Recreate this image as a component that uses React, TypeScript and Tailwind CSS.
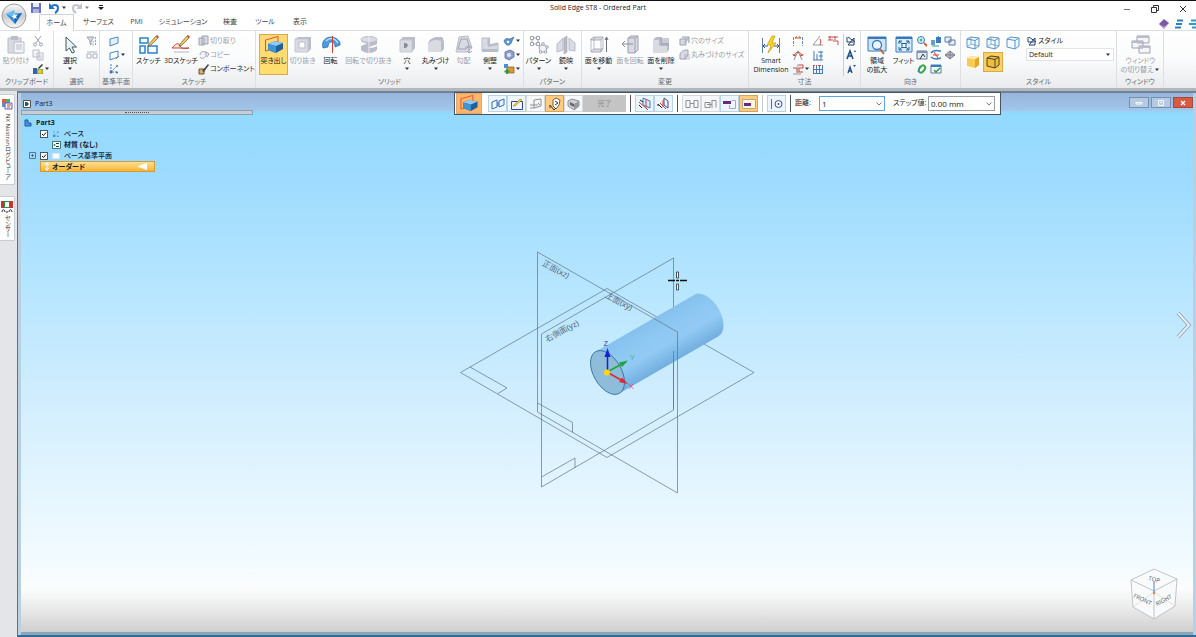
import React from "react";

type Kids = { children?: React.ReactNode };

const Big = ({ children }: Kids) => (
  <svg viewBox="0 0 20 20" className="h-5 w-5 shrink-0" aria-hidden="true" fill="none" strokeWidth="1">
    {children}
  </svg>
);
const Sm = ({ children }: Kids) => (
  <svg viewBox="0 0 12 12" className="h-3 w-3 shrink-0" aria-hidden="true" fill="none" strokeWidth="1">
    {children}
  </svg>
);
const Caret = () => (
  <svg viewBox="0 0 6 4" className="h-1 w-1.5 shrink-0" aria-hidden="true">
    <path d="M1 .5h4L3 3z" fill="#333" />
  </svg>
);

/* ---------- ribbon building blocks ---------- */

function Group({ label, width, children }: Kids & { label: string; width: string }) {
  return (
    <section className={`flex shrink-0 flex-col border-r border-[#dcdfe3] pt-[3px] ${width}`} aria-label={label}>
      <div className="flex h-[42px] items-start">{children}</div>
      <div className="mt-px text-center leading-[10px] whitespace-nowrap text-[#666b73]">{label}</div>
    </section>
  );
}

function Tool({
  label,
  width,
  icon,
  off,
  active,
  caret,
}: {
  label: React.ReactNode;
  width: string;
  icon: React.ReactNode;
  off?: boolean;
  active?: boolean;
  caret?: boolean;
}) {
  return (
    <button
      type="button"
      className={`flex h-[41px] shrink-0 flex-col items-center border leading-[9px] whitespace-nowrap ${width} ${
        active ? "border-[#d9a94a] bg-linear-to-b from-[#ffd978] to-[#ffdf6e]" : "border-transparent"
      } ${off ? "text-[#9a9ea6]" : "text-[#222]"}`}
    >
      {icon}
      <span className="mt-px">{label}</span>
      {caret && (
        <span className="mt-0.5">
          <Caret />
        </span>
      )}
    </button>
  );
}

function Row({ name, icon, off, caret, text }: { name: string; icon: React.ReactNode; off?: boolean; caret?: boolean; text?: boolean }) {
  return (
    <button type="button" aria-label={name} className={`flex h-[14px] items-center whitespace-nowrap ${off ? "text-[#9a9ea6]" : "text-[#333]"}`}>
      {icon}
      {text && <span>{name}</span>}
      {caret && <Caret />}
    </button>
  );
}

/* ---------- icons ---------- */

const Pencil = ({ x, y }: { x: number; y: number }) => (
  <g transform={`translate(${x} ${y})`}>
    <path d="M0 9 7 1l2 2-7 7-3 1z" fill="#efc468" stroke="#7a5a2a" strokeWidth=".7" />
    <path d="m7 1 1-1 2 2-1 1z" fill="#b8433a" />
  </g>
);
const Solid = () => (
  <g>
    <path d="M1.500 5 14 1.500v10L1.500 16z" stroke="#e0552b" />
    <path d="m4 9 7-3 8 2v6l-7 4-8-3z" fill="#1f5f9c" />
    <path d="m4 9 7-3 8 2-7 3z" fill="#8fcbf3" />
    <path d="m4 9 8 2v7l-8-3z" fill="#3f93d8" />
  </g>
);
const WireCube = ({ fill, stroke = "#5a94c8", inner = true }: { fill?: string; stroke?: string; inner?: boolean }) => (
  <svg viewBox="0 0 14 14" className="h-3.5 w-3.5" aria-hidden="true" fill="none" stroke={stroke} strokeWidth="1">
    <path d="m1 3 4-2 8 1v8l-4 3-8-2z" fill={fill ?? "#f3faff"} />
    <path d="m1 3 8 1.500V13M9 4.500l4-2.500" />
    {inner && <path d="M5 1v7l8 2M5 8l-4 3" strokeWidth=".7" />}
  </svg>
);
const PlaneIcon = ({ c = "#4a86c0", f = "#e4f1fb" }: { c?: string; f?: string }) => <path d="m2 4 8-2v6l-8 3z" fill={f} stroke={c} />;
const DotAxes = () => (
  <>
    <path d="M3 1v8h7M3 9l5-5" stroke="#4a7fbe" strokeDasharray="2 1" />
    <circle cx="3" cy="9" r="1.500" fill="#3a6fb0" />
    <circle cx="9" cy="3" r="1" fill="#3a6fb0" />
    <circle cx="9" cy="9.500" r="1" fill="#3a6fb0" />
  </>
);
const Mag = ({ c = "#2f7fc2" }: { c?: string }) => (
  <>
    <circle cx="5" cy="5" r="3.500" fill="#dff1fb" stroke={c} />
    <path d="m8 8 3 3" stroke="#c2623a" strokeWidth="1.800" />
    <path d="M3.500 5h3M5 3.500v3" stroke="#2d9c62" />
  </>
);
const G1 = "#d9dbe3";
const G2 = "#b9bcc9";
const G3 = "#9da1b2";

function Ribbon() {
  return (
    <div className="flex h-[58px] shrink-0 overflow-hidden border-t border-[#dcdfe3] bg-linear-to-b from-white via-[#fafbfc] to-[#e9ebee]">
      <Group label="クリップボード" width="w-[54px]">
        <Tool
          label="貼り付け"
          width="w-[32px]"
          off
          icon={
            <Big>
              <path d="M2 3h13v15H2z" fill={G1} stroke={G2} />
              <path d="M5 1h7v4H5z" fill={G2} />
              <path d="M8 7h10v11H8z" fill="#f4f4f8" stroke={G2} />
              <path d="M10 10h6M10 12h6M10 14h6" stroke={G2} />
            </Big>
          }
        />
        <div className="flex flex-col">
          <Row name="切り取り" off icon={<Sm><path d="m3 1 5 7M9 1 4 8" stroke={G3} /><circle cx="3" cy="9.500" r="1.500" stroke={G3} /><circle cx="9" cy="9.500" r="1.500" stroke={G3} /></Sm>} />
          <Row name="コピー" off icon={<Sm><path d="M1 1h6v7H1zM5 4h6v7H5z" fill="#f4f4f8" stroke={G2} /><path d="M6.500 7h3M6.500 9h3" stroke={G2} /></Sm>} />
          <Row name="書式のコピー" caret icon={<Sm><path d="M1 5h4v6H1z" fill="#2d62b5" /><path d="M5 6h6v5H5z" fill="#8ab33a" /><circle cx="8" cy="8.500" r="2" fill="#f0c63c" /><path d="m6 5 4-4 1 1-4 4z" fill="#333" /></Sm>} />
        </div>
      </Group>

      <Group label="選択" width="w-[46px]">
        <Tool label="選択" width="w-[32px]" caret icon={<Big><path d="M6 2v14l3.500-3 2.500 5 2.500-1-2.500-5h4.500z" fill="#e8f4f3" stroke="#40575c" /></Big>} />
        <div className="flex flex-col">
          <Row name="フィルタ" off icon={<Sm><path d="M1 2h7L5 6v4L4 9V6z" fill={G1} stroke={G3} /><path d="M9.500 2v8M7 5.500v5" stroke={G3} strokeDasharray="2 1" /></Sm>} />
          <Row name="選択モード" off icon={<Sm><path d="M1 5h4v4H1zM7 5h4v4H7zM1 3h10" stroke={G3} strokeWidth=".8" /></Sm>} />
        </div>
      </Group>

      <Group label="基準平面" width="w-[33px]">
        <div className="ml-2 flex flex-col">
          <Row name="一致平面" icon={<Sm><PlaneIcon /></Sm>} />
          <Row name="平行平面" caret icon={<Sm><PlaneIcon f="none" /><path d="m8 10 3-3" stroke="#4a86c0" /></Sm>} />
          <Row name="座標系" icon={<Sm><DotAxes /></Sm>} />
        </div>
      </Group>

      <Group label="スケッチ" width="w-[123px]">
        <Tool label="スケッチ" width="w-[31px]" icon={<Big><path d="M1 3h8v5H1zM1 11h5v7H1zM9 11h9v7H9z" fill="#f7fcff" stroke="#2a82cc" strokeWidth="1.500" /><Pencil x={10} y={0} /></Big>} />
        <Tool label="3Dスケッチ" width="w-[34px]" icon={<Big><path d="M3 17h15" stroke="#b3b7bd" /><path d="M1 13c5-6 7-5 8-2s5 3 9 2z" stroke="#c5483f" fill="#f4e7dc" /><Pencil x={9} y={0} /></Big>} />
        <div className="flex flex-col">
          <Row name="切り取り" text off icon={<Sm><path d="M1 3h5v7H1zM4 1h6v8H4z" fill={G1} stroke={G3} /></Sm>} />
          <Row name="コピー" text off icon={<Sm><path d="M2 6c0-3 3-4 6-3v4c-2 3-5 3-6 1M8 3l3 2-2 3" fill="#f4f4f8" stroke={G3} /></Sm>} />
          <Row name="コンポーネント" text icon={<Sm><path d="M1 6h5v5H1z" fill="#d9b46c" stroke="#6a5030" /><path d="m4 8 6-7 1 1-5 7z" fill="#4a4a58" /></Sm>} />
        </div>
      </Group>

      <Group label="ソリッド" width="w-[268px]">
        <div className="w-[3px]" />
        <Tool label="突き出し" width="w-[29px]" active icon={<Big><Solid /></Big>} />
        <Tool label="切り抜き" width="w-[29px]" off icon={<Big><path d="m2 4 3-2h13v12l-3 3H2z" fill={G2} /><path d="M2 4h13v13H2z" fill={G1} stroke="#c6c9d3" /><path d="M6 7h6v6H6z" fill="#fff" stroke={G2} /></Big>} />
        <Tool label="回転" width="w-[27px]" icon={<Big><path d="M2 13C0 6 5 2 10 2s10 4 9 8l-5 2c0-4-2-5-4-5s-3 3-3 5z" fill="#4b9be0" stroke="#2564a6" strokeWidth=".7" /><path d="M5 6c4-4 9-3 12 2" stroke="#b7dffb" strokeWidth="1.500" /><path d="M11.500 1v17" stroke="#d4402f" /></Big>} />
        <Tool label="回転で切り抜き" width="w-[49px]" off icon={<Big><ellipse cx="10" cy="4.500" rx="8" ry="3" fill={G1} stroke={G2} /><path d="M2 5c4 3 12 3 16 0v4c-3 2-8 2-8 4 4 0 6-1 8-2v4c-4 4-12 4-16 0v-4c3-1 5-2 6-3-3 0-5-1-6-2z" fill={G2} /><path d="M10 1v17" stroke="#e8e9ee" /></Big>} />
        <Tool label="穴" width="w-[28px]" caret icon={<Big><path d="m3 5 3-3h12v11l-3 4H3z" fill={G2} /><path d="M3 5h12v12H3z" fill={G1} stroke="#c6c9d3" /><path d="M7 8c5-1 5 5 0 5z" fill="#858aa0" /></Big>} />
        <Tool label="丸みづけ" width="w-[29px]" caret icon={<Big><path d="M2 17V9c1-5 5-7 10-7h4c2 2 2 5 2 12l-3 3z" fill={G2} /><path d="M2 17V9c3-4 8-5 13-3v11z" fill={G1} /></Big>} />
        <Tool label="勾配" width="w-[27px]" off icon={<Big><path d="m5 2 9-1 4 12-5 4H2z" fill={G1} stroke={G2} /><path d="M7 4h6l2 7-3 3H4z" stroke={G3} /><path d="M11 12h7m-3-2v8m-2-2 2 2 3-2" stroke={G3} /></Big>} />
        <Tool label="側壁" width="w-[26px]" caret icon={<Big><path d="M2 3h6v7l10-2v8H2z" fill={G1} stroke={G2} /><path d="m8 3 2-1v8l8-2v2L8 12zM2 14h16v3H2z" fill={G2} /></Big>} />
        <div className="flex flex-col">
          <Row name="薄板" caret icon={<Sm><path d="M1 6c2-4 4-2 6-2l4-2-2 4C8 11 3 12 1 6z" fill="#5b97cf" stroke="#2c5b8e" strokeWidth=".6" /><circle cx="5" cy="7" r="1.300" fill="#fff" /></Sm>} />
          <Row name="ねじ山" caret icon={<Sm><path d="m2 3 5-2 4 2v5l-5 3-4-2z" fill="#8fa0cc" stroke="#4b5c94" strokeWidth=".7" /><circle cx="6" cy="6" r="2" fill="#dfe7f7" /></Sm>} />
          <Row name="追加" caret icon={<Sm><path d="M4 4h7v6H4z" fill="#d89c34" stroke="#a04a28" strokeWidth=".7" /><path d="M1 1h4v4H1z" fill="#4a8ed0" /><path d="M4 6v5M1.500 8.500h5" stroke="#2f9c3e" strokeWidth="2" /></Sm>} />
        </div>
      </Group>

      <Group label="パターン" width="w-[58px]">
        <Tool label="パターン" width="w-[29px]" caret icon={<Big><path d="M3 3h6v6H3z" stroke={G3} /><path d="M1.500 1.500h3v3h-3zM7.500 1.500h3v3h-3zM1.500 7.500h3v3h-3zM7.500 7.500h3v3h-3z" fill="#fff" stroke={G3} /><path d="m14 9 4 3-1.500 5h-5L10 12z" fill="#f4f4f8" stroke={G3} /><circle cx="14" cy="9" r="1.300" fill="#fff" stroke={G3} /><circle cx="18" cy="12" r="1.300" fill="#fff" stroke={G3} /><circle cx="16.500" cy="17" r="1.300" fill="#fff" stroke={G3} /><circle cx="11.500" cy="17" r="1.300" fill="#fff" stroke={G3} /></Big>} />
        <Tool label="鏡映" width="w-[26px]" caret icon={<Big><path d="M1 9 7 3v12l-6 2zM13 3l6 5v8l-6-1z" fill={G1} stroke={G2} /><path d="m8 3 3-2v16l-3 2z" fill={G2} stroke={G3} strokeWidth=".6" /></Big>} />
      </Group>

      <Group label="変更" width="w-[167px]">
        <Tool label="面を移動" width="w-[33px]" caret icon={<Big><path d="m2 4 3-2h9l-2 3H2zM2 16l3-2h9l-2 3H2z" fill={G1} stroke={G3} strokeWidth=".8" /><path d="M2 4v12M12 5v12M5 2v12M14 2v12" stroke={G3} strokeWidth=".7" /><path d="M17.500 17V3m-1.500 2 1.500-3L19 5" stroke="#666b80" /></Big>} />
        <Tool label="面を回転" width="w-[30px]" off icon={<Big><path d="m8 3 3-2h7v14l-3 3H8z" fill={G1} stroke={G3} /><path d="M8 3h7v15M15 3l3-2" stroke={G3} /><path d="M13 9H2l3-3M2 9l3 3" stroke="#868ba0" /></Big>} />
        <Tool label="面を削除" width="w-[32px]" caret icon={<Big><path d="m2 5 3-3h6v6h7v7l-3 3H2z" fill={G2} /><path d="M2 5h6v6h8v7H2z" fill={G1} /><path d="M9 3h9v8l-8-1z" fill={G3} opacity=".55" /></Big>} />
        <div className="ml-[2px] flex flex-col">
          <Row name="穴のサイズ" text off icon={<Sm><path d="M1 4h6v6H1zM3 2h7v6" fill={G1} stroke={G3} /><path d="m5 8 5-6" stroke={G3} /></Sm>} />
          <Row name="丸みづけのサイズ" text off icon={<Sm><path d="M1 10V5c2-4 5-4 8-4v5l-3 4z" fill={G1} stroke={G3} /><path d="M5 6h6M5 8h6M5 10h6" stroke={G3} strokeWidth=".7" /></Sm>} />
        </div>
      </Group>

      <Group label="寸法" width="w-[112px]">
        <div className="w-[1px]" />
        <Tool label={<>Smart<br />Dimension</>} width="w-[42px]" icon={<Big><path d="M1.500 3v15M18.500 3v15" stroke="#5a7fb4" /><path d="M2 11h5M13 11h5M4 9l-2 2 2 2M16 9l2 2-2 2" stroke="#38588c" /><path d="m11 1-5 9h4l-3 8 8-10h-4l3-7z" fill="#ffd21e" stroke="#b98a10" strokeWidth=".6" /></Big>} />
        <div className="grid w-[49px] grid-cols-[20px_15px_14px]">
          <Row name="距離" icon={<Sm><path d="M1.500 2v9M10.500 2v9" stroke="#5a8fd0" strokeDasharray="3 1" /><path d="M3 3h6M3 3l2-1.500M9 3 7 1.500" stroke="#d0402f" /></Sm>} />
          <Row name="角度寸法" icon={<Sm><path d="M1 10 8 1M1 10h10" stroke="#999" /><path d="M8 4c1 1 1 4 0 6" stroke="#d0402f" /></Sm>} />
          <Row name="寸法公差" icon={<Sm><path d="M1 2h10M3 1v4M8 1v4M1 5h5M6 6h5v4" stroke="#c0504a" /></Sm>} />
          <Row name="角度" icon={<Sm><path d="M6 2 2 11M6 2l4 9" stroke="#8a8f98" /><path d="M2 7c1-5 7-5 8 0M1 5l1 2 2-1M11 5l-1 2-2-1" stroke="#d0402f" /></Sm>} />
          <Row name="累進寸法" icon={<Sm><path d="M2 2v9M5 5v6M9 2v9M1 11h10M6 3h5M7 7h4" stroke="#447ab8" /></Sm>} />
          <span />
          <Row name="座標寸法" caret icon={<Sm><path d="M1 5h4v5M7 2h4v3H7v4h4" stroke="#d0402f" /><path d="M1 11h8M6 1v9" stroke="#999" /></Sm>} />
          <Row name="整列" icon={<Sm><path d="M1.500 2v9M4.500 2v9M7.500 2v9M10.500 2v9M1 6.500h10M1 10.500h10" stroke="#447ab8" /><path d="M2 2.500h8" stroke="#c0504a" strokeDasharray="1 1" /></Sm>} />
        </div>
        <div className="ml-0.5 flex flex-col border-l border-[#c9ccd2] pl-[1px]">
          <Row name="寸法スタイル" icon={<Sm><path d="M2 2v5h6M9 3v7H3zM3 2l7 5" stroke="#1f3f70" /></Sm>} />
          <Row name="文字を大きく" icon={<Sm><path d="m2 10 3-8 3 8M3.300 7h3.500" stroke="#1f4f86" strokeWidth="1.600" /><path d="m9 3 1-2 1 2z" fill="#1f4f86" /></Sm>} />
          <Row name="文字を小さく" icon={<Sm><path d="m3 10 2-6 2 6M4 8h2.500" stroke="#1f4f86" strokeWidth="1.300" /><path d="M8 2h3l-1.500 2z" fill="#1f4f86" /></Sm>} />
        </div>
      </Group>

      <Group label="向き" width="w-[100px]">
        <Tool label={<>領域<br />の拡大</>} width="w-[32px]" icon={<Big><path d="M1 2h18v14H1z" fill="#cfe6f8" stroke="#3778bb" /><path d="M1 2h18v2H1z" fill="#3778bb" /><circle cx="10" cy="10" r="4.500" fill="#eaf6fc" stroke="#3c7ab0" strokeWidth="1.300" /><path d="m13 14 4 5" stroke="#b06a4e" strokeWidth="2" /></Big>} />
        <Tool label="フィット" width="w-[21px]" icon={<Big><path d="M2 2h16v15H2z" fill="#d9ecfa" stroke="#3778bb" /><path d="M2 2h16v2H2z" fill="#3778bb" /><path d="M5 9V6h3M12 6h3v3M15 12v3h-3M8 15H5v-3M5 6l10 9M15 6 5 15" stroke="#27619f" /><path d="M8 8.500h4v4H8z" fill="#f4faff" stroke="#27619f" /></Big>} />
        <div className="ml-0.5 grid grid-cols-[14px_14px_14px]">
          <Row name="ズーム" icon={<Sm><Mag /></Sm>} />
          <Row name="画面移動" icon={<Sm><path d="M1 5h4v5H1z" fill="#6d9cc9" /><path d="M6 2h5v6H6z" fill="#3c7ab8" /><path d="M2 11h7M8 1l3 3" stroke="#2d9c8a" /></Sm>} />
          <Row name="前の表示" icon={<Sm><path d="M1 2h6v5H1zM5 5h6v5H5z" fill="#e9f2fa" stroke="#5679a5" /></Sm>} />
          <Row name="回転表示" icon={<Sm><path d="M1 2h10v8H1z" fill="#e8eef5" stroke="#56799f" /><path d="M1 2h10v2H1z" fill="#7793b5" /><path d="m4 10 3-5 2 3" stroke="#333" /></Sm>} />
          <Row name="スピン" icon={<Sm><path d="M1 4c3-4 7-2 10-2M1 8c3 3 7 2 10 1" stroke="#377fc0" strokeWidth="1.500" /><path d="M3 6h6M4 3l4 6" stroke="#d0402f" /></Sm>} />
          <Row name="共通表示" icon={<Sm><path d="m1 6 5-4 5 4-5 4z" fill="#b9bec7" stroke="#7b828e" /><path d="M6 2v8M1 6h10" stroke="#666c78" strokeWidth=".7" /></Sm>} />
          <Row name="面を見る" icon={<Sm><ellipse cx="6" cy="6" rx="2.500" ry="4" transform="rotate(35 6 6)" stroke="#35a548" strokeWidth="2" /><path d="m2 9 2-6" stroke="#2c86c0" /></Sm>} />
          <Row name="スケッチ表示" icon={<Sm><path d="M1 2h10v8H1z" fill="#f4faff" stroke="#56799f" /><path d="M1 2h10v2H1z" fill="#3c7ac0" /><path d="m4 7 2 2 4-4" stroke="#2f9c3e" strokeWidth="1.500" /></Sm>} />
        </div>
      </Group>

      <Group label="スタイル" width="w-[156px]">
        <div className="ml-[2px] grid grid-cols-3 leading-none">
          {["ワイヤーフレーム", "隠線を薄く", "隠線なし"].map((n, i) => (
            <button key={n} type="button" aria-label={n} className="grid h-[18px] w-5 place-items-center">
              <WireCube inner={i < 2} />
            </button>
          ))}
          <button type="button" aria-label="シェーディング" className="grid h-5 w-5 place-items-center">
            <svg viewBox="0 0 14 14" className="h-3.5 w-3.5" aria-hidden="true">
              <path d="m1 3 4-2 8 1v8l-4 3-8-2z" fill="#f8cc50" />
              <path d="m1 3 4-2 8 1-4 2.500z" fill="#ffe9a8" />
              <path d="m9 4.500 4-2.500v8l-4 3z" fill="#e5a42a" />
            </svg>
          </button>
          <button type="button" aria-label="エッジ付きシェーディング" aria-pressed="true" className="grid h-5 w-5 place-items-center border border-[#d9a94a] bg-[#ffcf62]">
            <WireCube fill="#f0be3a" stroke="#4a4432" inner={false} />
          </button>
        </div>
        <div className="ml-[3px] flex w-[88px] flex-col">
          <label htmlFor="style" className="flex h-[14px] items-center text-[#222]">
            <Sm><path d="M2 2v5h6M9 3v7H3zM3 2l7 5" stroke="#1f3f70" /></Sm>
            スタイル
          </label>
          <span className="relative flex h-[13px] items-center border border-[#e1e3e7] bg-white">
            <select id="style" defaultValue="Default" className="h-full w-full appearance-none pl-0.5 text-[7px] leading-none text-[#222] outline-none">
              <option>Default</option>
            </select>
            <span className="pointer-events-none absolute right-0.5"><Caret /></span>
          </span>
        </div>
      </Group>

      <Group label="ウィンドウ" width="w-[47px]">
        <Tool
          label={<>ウィンドウ<br />の切り替え<span className="ml-px inline-block align-middle"><Caret /></span></>}
          width="w-[47px]"
          off
          icon={<Big><path d="M6 1h12v7H6zM1 6h11v7H1zM8 11h11v7H8z" fill="#f6f6f9" stroke={G3} /><path d="M6 1h12v2H6zM1 6h11v2H1zM8 11h11v2H8z" fill={G2} /></Big>}
        />
      </Group>
    </div>
  );
}

/* ---------- title bar and tabs ---------- */

function Header() {
  return (
    <header className="relative flex h-[30px] shrink-0 border-t border-[#111] bg-white">
      <button type="button" aria-label="アプリケーション" className="flex w-[27px] items-center justify-center">
        <svg viewBox="0 0 26 26" className="h-[26px] w-[26px]" aria-hidden="true">
          <defs>
            <linearGradient id="orb" x2="0" y2="1">
              <stop stopColor="#fafafa" />
              <stop offset=".5" stopColor="#c9cbd0" />
              <stop offset="1" stopColor="#f8f8f8" />
            </linearGradient>
          </defs>
          <circle cx="13" cy="13" r="12" fill="url(#orb)" stroke="#9b9ea4" />
          <path d="m5 11 16-1-7 11z" fill="#2e8fd2" />
          <path d="m5 11 8-4 3 9z" fill="#64bdf0" />
          <path d="m13 13 8-3-7 11z" fill="#1969b0" />
          <path d="m13 10 1 2 3-.5-2 2 1 2-2-.5-1.500 1.500v-2l-2-1 2-1z" fill="#fff" />
        </svg>
      </button>
      <div className="flex min-w-0 grow flex-col">
        <div className="flex h-[13px] items-center gap-1 pl-[3px]">
          <button type="button" aria-label="保存">
            <Sm><path d="M1 1h10v10H1z" fill="#6972bd" /><path d="M3 1h6v4H3z" fill="#e8eafa" /><path d="M3 7h6v4H3z" fill="#aeb4e0" /></Sm>
          </button>
          <button type="button" aria-label="元に戻す" className="ml-0.5 flex items-center gap-px">
            <Sm><path d="M3 6c1-4 7-4 7 0 0 2-1 4-3 5" stroke="#2375c8" strokeWidth="2" /><path d="M1 1v6h6z" fill="#2375c8" /></Sm>
            <Caret />
          </button>
          <button type="button" aria-label="やり直し" className="flex items-center gap-px opacity-60">
            <Sm><path d="M9 6C8 2 2 2 2 6c0 2 1 4 3 5" stroke="#9aa0aa" strokeWidth="2" /><path d="M11 1v6H5z" fill="#9aa0aa" /></Sm>
            <Caret />
          </button>
          <button type="button" aria-label="クイックアクセスのカスタマイズ" className="ml-1">
            <svg viewBox="0 0 6 6" className="h-1.5 w-1.5" aria-hidden="true"><path d="M1 0h4v1H1zM0 2h6L3 5z" fill="#222" /></svg>
          </button>
        </div>
        <nav className="flex h-4 text-[#444]">
          <a href="#home" className="ml-3 flex h-[17px] w-[35px] items-center justify-center border border-b-0 border-[#cfd3d9] bg-white">ホーム</a>
          <a href="#surface" className="flex h-[17px] w-[49px] items-center justify-center">サーフェス</a>
          <a href="#pmi" className="flex h-[17px] w-[27px] items-center justify-center">PMI</a>
          <a href="#simulation" className="flex h-[17px] w-[66px] items-center justify-center">シミュレーション</a>
          <a href="#inspect" className="flex h-[17px] w-[28px] items-center justify-center">検査</a>
          <a href="#tools" className="flex h-[17px] w-[42px] items-center justify-center">ツール</a>
          <a href="#view" className="flex h-[17px] w-[28px] items-center justify-center">表示</a>
        </nav>
      </div>
      <h1 className="pointer-events-none absolute inset-x-0 top-0.5 text-center text-[7px] leading-[10px] text-[#222]">Solid Edge ST8 - Ordered Part</h1>
      <div className="flex w-20 flex-col items-end justify-between">
        <div className="flex h-4 items-center gap-4 pr-[7px]">
          <button type="button" aria-label="最小化"><Sm><path d="M3 6.500h6" stroke="#777" /></Sm></button>
          <button type="button" aria-label="元に戻す（縮小）"><Sm><path d="M2.500 4.500h5v5h-5zM4.500 4V2.500h5v5H8" stroke="#333" /></Sm></button>
          <button type="button" aria-label="閉じる"><Sm><path d="m3 3 6 6M9 3 3 9" stroke="#333" /></Sm></button>
        </div>
        <div className="-mr-1 flex items-center gap-[3px]">
          <button type="button" aria-label="ヘルプ"><Sm><path d="m1 6 5-5 5 4-5 6z" fill="#7c5aa8" /><path d="m1 6 5 3 5-4-5 6z" fill="#c9b8e0" /></Sm></button>
          <button type="button" aria-label="リボンを最小化"><Sm><path d="M4 2.500h6M3 6h6M2 9.500h6" stroke="#2e7cc2" strokeWidth="2" /></Sm></button>
          <button type="button" aria-label="並べて表示"><Sm><path d="M3 2.500h8M1 6h8M4 9.500h6" stroke="#2e9cc8" strokeWidth="2" /></Sm></button>
        </div>
      </div>
    </header>
  );
}

/* ---------- docked side tabs ---------- */

function SideTabs() {
  return (
    <aside className="flex w-[17px] shrink-0 flex-col bg-[#e3e5e8] text-[6px] text-[#333] [font-feature-settings:'vpal']">
      <button type="button" className="mt-[3px] flex h-[91px] w-[15px] flex-col items-center border border-l-0 border-[#c9cdd2] bg-white pt-[3px]">
        <Sm><path d="M1 1h8v8H1z" fill="#5a8fd8" /><path d="M1 1h4v4H1z" fill="#e55a3a" /><path d="M5 1h4v3H5z" fill="#49b45a" /><path d="M4 5h7v6H4z" fill="#f4f6fb" stroke="#6a58b0" /><path d="M6 7h4M6 9h3" stroke="#d04a40" /></Sm>
        <span className="mt-1 whitespace-nowrap [writing-mode:vertical-rl]">NX Nastranログビューア</span>
      </button>
      <button type="button" className="mt-[11px] flex h-[45px] w-[15px] flex-col items-center border border-l-0 border-[#c9cdd2] bg-white pt-1">
        <Sm><path d="M0 0h12v7H0z" fill="#2d8b4a" /><path d="M0 0h3v7H0zM9 0h3v7H9z" fill="#c8342c" /><path d="M4 1h4v5H4z" fill="#f4fff4" /><path d="M1 11c0-3 3-3 3 0M5 11h2M8 11c0-3 3-3 3 0" stroke="#222" /></Sm>
        <span className="mt-0.5 whitespace-nowrap [writing-mode:vertical-rl]">センサー</span>
      </button>
    </aside>
  );
}

/* ---------- feature tree ---------- */

function Check({ name }: { name: string }) {
  return (
    <span className="relative grid h-2 w-2 place-items-center">
      <input type="checkbox" defaultChecked aria-label={name} className="h-2 w-2 appearance-none border border-[#44586c] bg-white" />
      <svg viewBox="0 0 8 8" className="pointer-events-none absolute h-2 w-2" aria-hidden="true"><path d="m2 4 1.500 1.500L6 2.500" stroke="#111" fill="none" /></svg>
    </span>
  );
}

function Tree() {
  return (
    <div className="absolute top-[6px] left-0 w-[232px] text-[#14202c]">
      <div className="flex h-[10px] items-center gap-1 pl-0.5">
        <svg viewBox="0 0 8 8" className="h-2 w-2" aria-hidden="true"><path d="M.5.5h7v7h-7z" fill="#fff" stroke="#555" /><path d="M2 2h2l2 2-2 2H2z" fill="#1f5c4c" /></svg>
        <span>Part3</span>
      </div>
      <div className="mt-px flex h-[5px] items-center justify-center border border-[#8ba0b2] bg-[#c6ced4]">
        <span className="w-6 border-t border-dotted border-[#555]" />
      </div>
      <ul className="mt-[2px] ml-[3px] leading-[11px]">
        <li className="flex h-[11px] items-center gap-1 font-bold">
          <svg viewBox="0 0 8 8" className="h-2 w-2" aria-hidden="true"><path d="M1 1h3v3h3v3H1z" fill="#4b95de" stroke="#1f55a0" /></svg>
          Part3
        </li>
        <li className="flex h-[11px] items-center gap-1 pl-4">
          <Check name="ベース" />
          <svg viewBox="0 0 12 12" className="h-2 w-2" aria-hidden="true" fill="none"><DotAxes /></svg>
          <span className="font-medium">ベース</span>
        </li>
        <li className="flex h-[11px] items-center gap-[3px] pl-7 font-bold">
          <svg viewBox="0 0 9 8" className="h-2 w-[9px]" aria-hidden="true" fill="none"><path d="M.5.5h8v7h-8z" fill="#f4fff8" stroke="#3d7a74" /><path d="M4 2.500h3M4 5.500h3" stroke="#333" /><circle cx="2.500" cy="4" r="1" fill="#2c8a54" /></svg>
          材質 (なし)
        </li>
        <li className="flex h-[11px] items-center gap-1 pl-[5px]">
          <button type="button" aria-label="展開">
            <svg viewBox="0 0 7 7" className="h-[7px] w-[7px]" aria-hidden="true"><path d="M.5.5h6v6h-6zM2 3.500h3M3.500 2v3" fill="none" stroke="#4a5f74" strokeWidth=".8" /></svg>
          </button>
          <Check name="ベース基準平面" />
          <svg viewBox="0 0 8 8" className="h-2 w-2" aria-hidden="true"><path d="M0 1h8v6H0z" fill="#f4faff" stroke="#b0d4ef" /></svg>
          <span className="font-medium">ベース基準平面</span>
        </li>
        <li className="ml-4 flex h-[11px] w-[115px] items-center border border-[#cf9d3f] bg-linear-to-b from-[#ffdf8d] to-[#f9b429] font-bold">
          <svg viewBox="0 0 9 9" className="h-[9px] w-[9px]" aria-hidden="true"><path d="M6 0v9M4 3l2-2 2 2M4 6l2 2 2-2" fill="none" stroke="#fff" /></svg>
          <span className="ml-0.5 grow">オーダード</span>
          <svg viewBox="0 0 11 9" className="mr-1.5 h-[9px] w-[11px]" aria-hidden="true"><path d="M0 4.500 10 1v7z" fill="#fff" /></svg>
        </li>
      </ul>
    </div>
  );
}

/* ---------- floating command bar ---------- */

function Cmd({ name, on, plain, children }: Kids & { name: string; on?: boolean; plain?: boolean }) {
  return (
    <button
      type="button"
      aria-label={name}
      aria-pressed={on}
      className={`grid h-[17px] w-[19px] shrink-0 place-items-center border ${
        on ? "border-[#d3a55c] bg-[#ffcb7c]" : plain ? "border-[#d5d8dc] bg-[#f6f7f8]" : "border-[#b9d2e6] bg-[#eef6fd]"
      }`}
    >
      <svg viewBox="0 0 14 14" className="h-3.5 w-3.5" fill="none" aria-hidden="true">{children}</svg>
    </button>
  );
}
const Rule = () => <span className="mx-[4px] h-[17px] w-px shrink-0 bg-[#4a5460]" />;
const Chevron = () => (
  <svg viewBox="0 0 6 4" className="pointer-events-none h-1 w-1.5 shrink-0" aria-hidden="true"><path d="m.5.5 2.500 2.500L5.500.5" fill="none" stroke="#556" strokeWidth=".8" /></svg>
);

function CommandBar() {
  return (
    <div role="toolbar" aria-label="突き出し" className="absolute -top-px left-[433px] flex h-[23px] w-[547px] items-center border border-[#47535f] bg-white pl-px text-[#222]">
      <button type="button" aria-label="突き出しオプション" className="grid h-[21px] w-[26px] shrink-0 place-items-center border border-[#e0a870] bg-[#ffb56a]">
        <svg viewBox="0 0 20 20" className="h-[19px] w-[22px]" fill="none" aria-hidden="true"><Solid /></svg>
      </button>
      <div className="ml-[6px] flex">
        <Cmd name="平面ステップ"><path d="m1 5 5-2v7l-5 2zM8 4l5-2v6l-5 2zM6 6h2M6 8h2" stroke="#3b6cae" /></Cmd>
        <Cmd name="プロファイル"><path d="M1.500 4.500h11v8h-11z" stroke="#3a3f9a" /><path d="m3 9 7-7 2 1-7 6z" fill="#f1d34a" stroke="#8a6a20" strokeWidth=".5" /></Cmd>
        <Cmd name="側面ステップ" plain><path d="m5 3 7-1v7l-7 2zM1 11h4M1 8h8M9 6l2 2" stroke="#8b9097" /></Cmd>
        <Cmd name="範囲ステップ" on><path d="m5 3 3-2 4 2-1 5-3 4-3-3z" fill="#fff" stroke="#74604a" /><path d="m7 4 3 2-3 2M2 8l4 5M2 8v3M6 13l2-2" stroke="#33344a" /></Cmd>
        <Cmd name="処理ステップ" plain><path d="m1 4 4-2 7 2v5l-5 4-6-4z" fill="#cfd2d6" stroke="#8b9097" /><path d="m7 7 5-3v5l-5 4z" fill="#999" /><path d="m3 5 4 2v3L3 8z" fill="#666" /></Cmd>
      </div>
      <button type="button" disabled className="h-[17px] w-[43px] shrink-0 bg-[#c4c4c4] leading-none text-[#8b8b8b]">完了</button>
      <Rule />
      <div className="flex">
        <Cmd name="非対称"><path d="m5 1 7 3v7L5 8z" fill="#cdeefc" stroke="#4a7ac0" /><path d="m1 5 9 8M8 2v9" stroke="#d0403f" /><path d="m1 8 3 3M2 3l3 2" stroke="#222" /></Cmd>
        <Cmd name="対称"><path d="m7 1 4 3v7L7 8z" stroke="#444a80" /><path d="m3 6 6 6M6 3v7" stroke="#d0403f" /><path d="m1 7 4 4M1 7v2" stroke="#222" /></Cmd>
      </div>
      <Rule />
      <div className="flex">
        <Cmd name="全貫通" plain><path d="M1 3.500h4v7H1zM9 3.500h4v7H9zM5 6.500h4" stroke="#8b9097" /></Cmd>
        <Cmd name="次の面まで" plain><path d="M1 5.500h5v5H1zM8 3.500h4v7M8 3v8M3 7.500h5" stroke="#8b9097" /></Cmd>
        <Cmd name="面から面まで"><path d="M8.500 3.500h4v8h-6V8" stroke="#a8a8b8" /><path d="M0 4h8v3H0z" fill="#662a80" /></Cmd>
        <Cmd name="有限範囲" on><path d="M.5 2.500h13v9H.5z" fill="#fff4de" stroke="#b3a98f" /><path d="M2 6h7v3H2z" fill="#662a80" /></Cmd>
      </div>
      <span className="mx-[4px] h-[17px] w-px shrink-0 bg-[#c2c7cc]" />
      <Cmd name="キーポイント"><path d="M1.500 2v10" stroke="#a44a80" /><circle cx="8.500" cy="7" r="3.500" stroke="#3f4f90" /><circle cx="8.500" cy="7" r=".9" fill="#3f4f90" /></Cmd>
      <Rule />
      <label htmlFor="distance" className="w-[24px] shrink-0 whitespace-nowrap">距離:</label>
      <span className="flex h-[15px] w-[66px] shrink-0 items-center border border-[#59a5dd] bg-white pr-0.5">
        <input id="distance" defaultValue="1" autoFocus className="h-full w-full min-w-0 pl-[2px] text-[8px] outline-none" />
        <Chevron />
      </span>
      <label htmlFor="step" className="ml-2 w-[35px] shrink-0 whitespace-nowrap">ステップ値:</label>
      <span className="flex h-[15px] w-[67px] shrink-0 items-center border border-[#9a9fa6] bg-white pr-0.5">
        <select id="step" defaultValue="0.00 mm" className="h-full w-full appearance-none pl-0.5 text-[8px] leading-none outline-none">
          <option>0.00 mm</option>
        </select>
        <Chevron />
      </span>
    </div>
  );
}

/* ---------- model view ---------- */

function Scene() {
  return (
    <svg viewBox="457 246 300 250" className="h-[250px] w-[300px]" fill="none" role="img" aria-label="円柱の突き出しプレビュー">
      <defs>
        <linearGradient id="body" gradientUnits="userSpaceOnUse" x1="645" y1="322" x2="669" y2="364">
          <stop stopColor="#86c1ed" />
          <stop offset=".3" stopColor="#8dc8f3" />
          <stop offset=".6" stopColor="#92caf4" />
          <stop offset="1" stopColor="#71aedf" />
        </linearGradient>
      </defs>
      <g stroke="#5f7486" strokeWidth=".7">
        <path d="m460.500 371.500 146.500-84 147 84-147 85z" />
        <path d="M673.500 257v152L541.500 486V333z" />
      </g>
      <path d="m595.500 350.700 99-57a24 13.900 60 0 1 24 41.600l-99 57z" fill="url(#body)" />
      <ellipse cx="607.500" cy="371.500" rx="24" ry="13.900" transform="rotate(60 607.500 371.500)" fill="#8fbcd9" stroke="#2e6da0" strokeWidth=".8" />
      <g stroke="#5f7486" strokeWidth=".7">
        <path d="m537.500 251 140 80v161l-140-81z" />
        <path d="m470 366 37 21-9 5.500M537.500 402l35 19.500v10M541.500 476l33.500-19v10M673.500 350v59" />
      </g>
      <g fill="#4f6274" fontSize="8" className="font-sans">
        <text transform="translate(542 264) rotate(28)">正面(xz)</text>
        <text transform="translate(605 296) rotate(28)">上面(xy)</text>
        <text transform="translate(547 341) rotate(-28)">右側面(yz)</text>
      </g>
      <path d="M607.500 371V352" stroke="#1622d2" strokeWidth="1.500" />
      <path d="m604.500 356 3-9 3 9z" fill="#1622d2" />
      <path d="m607 371 15-8" stroke="#1da53c" strokeWidth="1.500" />
      <path d="m619 361.500 9-2-6 6.500z" fill="#1da53c" />
      <path d="m607 371 14 8" stroke="#dd2a30" strokeWidth="1.500" />
      <path d="m622 376.500 6 6.500-9-2z" fill="#dd2a30" />
      <circle cx="607" cy="371.500" r="3" fill="#ffd800" />
      <g fontSize="8">
        <text x="603.500" y="345" fill="#3a45a0">Z</text>
        <text x="630" y="359" fill="#37b86a">Y</text>
        <text x="629" y="388" fill="#e04a70">X</text>
      </g>
      <g stroke="#111">
        <path d="M668 279.500h7M680 279.500h7M676 279.500h3" strokeWidth="1.500" />
        <path d="M676.500 271h2v6h-2zM676.500 283h2v6h-2z" fill="#fff" strokeWidth=".7" />
      </g>
    </svg>
  );
}

function ViewCube() {
  return (
    <svg viewBox="0 0 48 52" className="absolute right-[15px] bottom-3 h-[52px] w-12" role="img" aria-label="ビューキューブ">
      <path d="M1 12 24 1l23 10-2 27-21 13L3 39z" fill="#f9fafb" stroke="#b3b6b9" strokeWidth=".8" />
      <path d="m1 12 23 11 23-12M24 23v28" fill="none" stroke="#b3b6b9" strokeWidth=".8" />
      <path d="m24 24 21 14M24 24 3 39" stroke="#e2cfc4" strokeWidth=".7" />
      <path d="M24 14v12" stroke="#4a86c8" />
      <circle cx="24" cy="25" r="1.200" fill="#e08a5a" />
      <g fontSize="6" fill="#555b62">
        <text x="18" y="12" transform="rotate(15 18 12)">TOP</text>
        <text x="3" y="29" transform="rotate(26 3 29)">FRONT</text>
        <text x="27" y="38" transform="rotate(-27 27 38)">RIGHT</text>
      </g>
    </svg>
  );
}

export default function App() {
  return (
    <div className="flex h-screen flex-col overflow-hidden bg-white font-['Open_Sans','Noto_Sans_CJK_JP',sans-serif] text-[7px] [font-feature-settings:'palt']" lang="ja">
      <Header />
      <Ribbon />
      <div className="h-[3px] shrink-0 bg-[#b3b7bc]" />
      <div className="flex min-h-0 grow">
        <SideTabs />
        <main className="relative flex min-w-0 grow flex-col border-t-2 border-b-2 border-l border-t-[#6c8396] border-b-[#2d6d98] border-l-[#5c7488] bg-[#b9d0e2] pr-[3px] pl-[3px]">
          <div className="relative grid grow place-items-center border-b-[3px] border-[#8aa8bc] bg-[linear-gradient(to_bottom,#97b5dc_0px,#a2c4e8_16px,#92dafe_20px,#a0dcff_18%,#b5e5ff_35%,#cfedfe_55%,#e6f6ff_75%,#f3fbff_87%,#fbfdfd_92%,#e8e8e8_96%,#cfcfcf_100%)] pt-[19px]">
            <Scene />
            <Tree />
            <CommandBar />
            <div className="absolute top-1 right-0 flex gap-[2px]">
              {["最小化", "最大化"].map((n, i) => (
                <button key={n} type="button" aria-label={n} className="grid h-[11px] w-5 place-items-center border border-[#7591b0] bg-[#b4cbe3]">
                  <svg viewBox="0 0 8 6" className="h-1.5 w-2" fill="none" aria-hidden="true">
                    <path d={i ? "M1.500.5h5v5h-5zM3 2.500h2" : "M1 2.500h6v1.500H1z"} stroke="#f8fbff" />
                  </svg>
                </button>
              ))}
              <button type="button" aria-label="文書を閉じる" className="grid h-[11px] w-5 place-items-center border border-[#a44a3c] bg-[#d85a43]">
                <svg viewBox="0 0 8 6" className="h-1.5 w-2" fill="none" aria-hidden="true"><path d="m2 1 4 4M6 1 2 5" stroke="#fff" strokeWidth="1.300" /></svg>
              </button>
            </div>
            <button type="button" aria-label="次へ" className="absolute top-[218px] right-px">
              <svg viewBox="0 0 16 28" className="h-7 w-4" fill="none" aria-hidden="true">
                <path d="m2 2 11 12L2 26" stroke="#8c9aa5" strokeWidth="3.500" />
                <path d="m2 2 11 12L2 26" stroke="#e6f3fb" strokeWidth="2" />
              </svg>
            </button>
            <ViewCube />
          </div>
        </main>
      </div>
    </div>
  );
}
